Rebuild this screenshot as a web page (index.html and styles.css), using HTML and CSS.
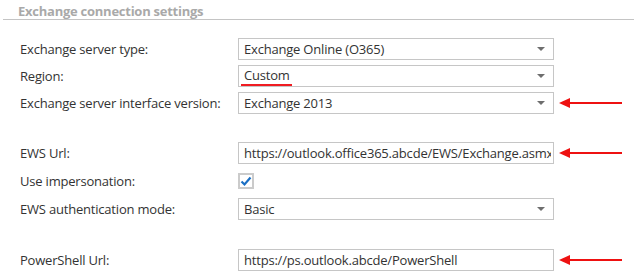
FILE: index.html
```html
<!DOCTYPE html>
<html>
<head>
<meta charset="utf-8">
<link rel="stylesheet" href="styles.css">
</head>
<body>
<div class="panel">
  <div class="section-head"><span class="section-title">Exchange connection settings</span></div>
  <div class="form">
    <div class="row">
      <div class="label">Exchange server type:</div>
      <div class="control select"><span class="value">Exchange Online (O365)</span><span class="caret"></span></div>
      <div class="note"></div>
    </div>
    <div class="row">
      <div class="label">Region:</div>
      <div class="control select"><span class="value region-value"><span class="marked">Custom</span></span><span class="caret"></span></div>
      <div class="note"></div>
    </div>
    <div class="row">
      <div class="label">Exchange server interface version:</div>
      <div class="control select"><span class="value">Exchange 2013</span><span class="caret"></span></div>
      <div class="note"><span class="arrow"></span></div>
    </div>
    <div class="spacer sp1"></div>
    <div class="row">
      <div class="label">EWS Url:</div>
      <div class="control input"><span class="value">https://outlook.office365.abcde/EWS/Exchange.asmx</span></div>
      <div class="note"><span class="arrow"></span></div>
    </div>
    <div class="row row-check">
      <div class="label">Use impersonation:</div>
      <div class="check-wrap"><span class="checkbox"><svg viewBox="0 0 12 12" width="12" height="12"><path d="M1.5 6.5 L4.5 9.5 L10.5 2.5" fill="none" stroke="#1a6fc4" stroke-width="2.2"/></svg></span></div>
      <div class="note"></div>
    </div>
    <div class="row">
      <div class="label">EWS authentication mode:</div>
      <div class="control select"><span class="value">Basic</span><span class="caret"></span></div>
      <div class="note"></div>
    </div>
    <div class="spacer sp2"></div>
    <div class="row">
      <div class="label">PowerShell Url:</div>
      <div class="control input"><span class="value">https://ps.outlook.abcde/PowerShell</span></div>
      <div class="note"><span class="arrow"></span></div>
    </div>
  </div>
</div>
</body>
</html>
```

FILE: styles.css
```css
html, body {
  margin: 0;
  padding: 0;
  background: #ffffff;
}
body {
  font-family: "Open Sans", "Noto Sans", Arial, sans-serif;
  font-size: 13px;
  letter-spacing: -0.2px;
  color: #333333;
}
.panel {
  width: 637px;
  height: 275px;
  box-sizing: border-box;
  padding-top: 3px;
}
.section-head {
  margin-left: 3px;
  width: 631px;
  border-bottom: 1px solid #c4c4c4;
  height: 17px;
  padding-left: 15px;
  box-sizing: border-box;
}
.section-title {
  font-weight: 700;
  color: #a9a9a9;
  font-size: 13px;
  letter-spacing: -0.25px;
  line-height: 16px;
  display: block;
}
.form {
  display: flex;
  flex-direction: column;
  gap: 5px;
  padding-top: 18px;
  padding-left: 20px;
}
.row {
  display: flex;
  align-items: center;
  height: 22px;
}
.row-check {
  height: 24px;
}
.label {
  width: 218px;
  flex: none;
  white-space: nowrap;
}
.control {
  width: 316px;
  height: 22px;
  box-sizing: border-box;
  border: 1px solid #c6c6c6;
  background: #fff;
  display: flex;
  align-items: center;
  padding-left: 5px;
  padding-right: 2px;
  overflow: hidden;
  flex: none;
}
.value {
  white-space: nowrap;
  overflow: hidden;
  flex: 1;
  line-height: 18px;
}
.region-value {
  overflow: visible;
  display: flex;
  align-items: flex-start;
  align-self: stretch;
  padding-top: 1px;
}
.marked {
  display: block;
  line-height: 17px;
  margin-left: -3px;
  padding: 0 2px 0 3px;
  border-bottom: 2px solid #f01c22;
}
.caret {
  width: 0;
  height: 0;
  border-left: 4px solid transparent;
  border-right: 4px solid transparent;
  border-top: 4px solid #6e6e6e;
  margin-right: 6px;
  flex: none;
}
.check-wrap {
  width: 316px;
  flex: none;
  display: flex;
  align-items: center;
}
.checkbox {
  width: 16px;
  height: 16px;
  box-sizing: border-box;
  border: 2px solid #cbcbcb;
  background: #fff;
  display: flex;
  align-items: center;
  justify-content: center;
}
.note {
  flex: none;
  width: 63px;
  margin-left: 5px;
  height: 10px;
  display: flex;
  align-items: center;
}
.arrow {
  display: block;
  position: relative;
  width: 63px;
  height: 10px;
}
.arrow::before {
  content: "";
  position: absolute;
  left: 0;
  top: 0;
  width: 0;
  height: 0;
  border-top: 5px solid transparent;
  border-bottom: 5px solid transparent;
  border-right: 11px solid #ee1111;
}
.arrow::after {
  content: "";
  position: absolute;
  left: 10px;
  right: 0;
  top: 4px;
  height: 2px;
  background: #ee1111;
}
.sp1 { height: 18px; }
.sp2 { height: 19px; }
```
